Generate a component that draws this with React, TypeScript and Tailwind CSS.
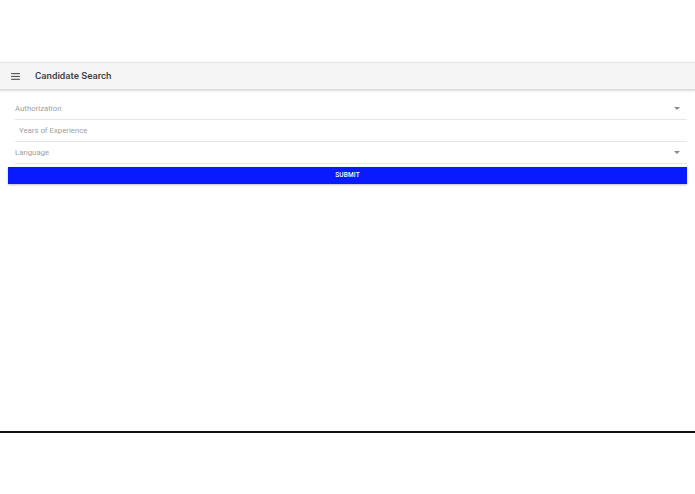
const font = { fontFamily: "Roboto, 'Liberation Sans', sans-serif" };

function Caret() {
  return (
    <svg width="6" height="3" viewBox="0 0 10 5" className="shrink-0">
      <path d="M0 0 L5 5 L10 0 Z" fill="#8a8a8a" />
    </svg>
  );
}

function Field({ label, select, indent }: { label: string; select?: boolean; indent?: boolean }) {
  return (
    <div className="h-[22px] ml-[15px] mr-[8px] flex items-center border-b border-[#e6e6e6]">
      <span className={`flex-1 text-[7.8px] text-[#a0a0a0] ${indent ? "pl-[4px]" : ""}`}>{label}</span>
      {select && <span className="mr-[7px] flex"><Caret /></span>}
    </div>
  );
}

export default function App() {
  return (
    <div className="h-[494px] w-[695px] bg-white flex flex-col" style={font}>
      <div className="h-[62px]" />
      <div className="h-[28px] border-t border-[#e2e2e2] bg-[#f5f5f5] flex items-center shadow-[0_1px_2px_rgba(0,0,0,0.15)] border-b border-b-[#dcdcdc]">
        <svg width="9" height="7" viewBox="0 0 10 8" className="ml-[11px]">
          <rect x="0" y="0" width="10" height="1.3" fill="#555" />
          <rect x="0" y="3.3" width="10" height="1.3" fill="#555" />
          <rect x="0" y="6.6" width="10" height="1.3" fill="#555" />
        </svg>
        <span className="ml-[15px] text-[9.7px] font-medium text-[#3c3c3c]">Candidate Search</span>
      </div>
      <div className="pt-[8px] flex flex-col">
        <Field label="Authorization" select />
        <Field label="Years of Experience" indent />
        <Field label="Language" select />
        <button className="mt-[3px] mx-[8px] h-[17px] bg-[#0a1aff] text-white text-[6.5px] font-medium tracking-wide shadow-[0_1px_2px_rgba(0,0,0,0.25)]">
          SUBMIT
        </button>
      </div>
      <div className="flex-1" />
      <div className="h-[2px] bg-[#111] mb-[61px]" />
    </div>
  );
}
